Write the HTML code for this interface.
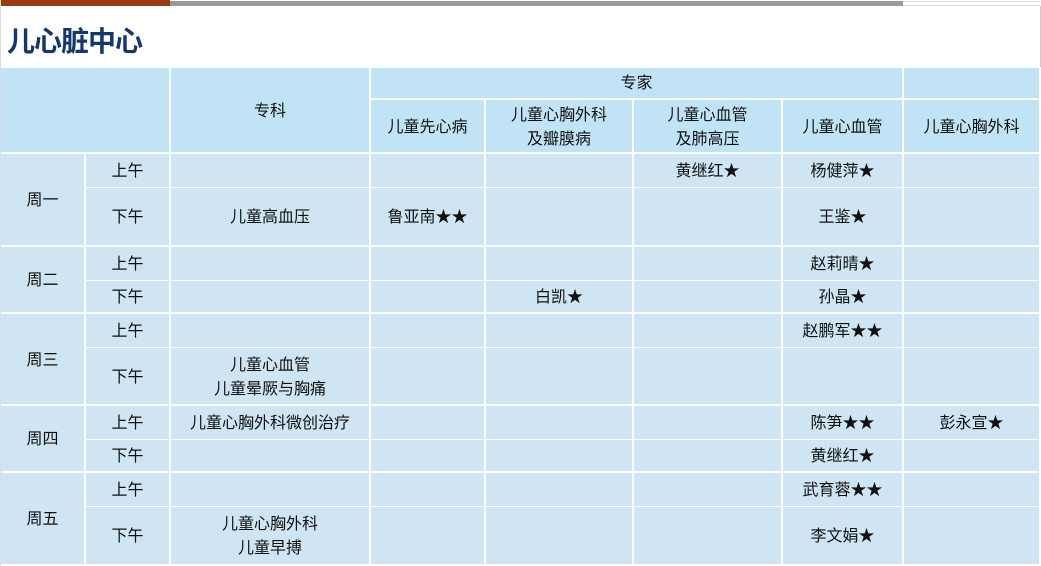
<!DOCTYPE html>
<html><head><meta charset="utf-8"><style>
*{margin:0;padding:0;box-sizing:border-box}
body{width:1041px;height:566px;background:#fff;font-family:"Liberation Sans","Noto Sans CJK SC","WenQuanYi Zen Hei",sans-serif;position:relative;overflow:hidden}
.b1{position:absolute;left:0;top:0;width:170px;height:6px;background:#9a3a12}
.b2{position:absolute;left:170px;top:1px;width:733px;height:5px;background:#999}
.b3{position:absolute;left:903px;top:1px;width:137px;height:5px;border-top:1px solid #ddd;border-bottom:1px solid #ddd}
.lb{position:absolute;left:0;top:0;width:1px;height:566px;background:#ddd}
.rb{position:absolute;left:1040px;top:6px;width:1px;height:61px;background:#ccc}
h1{position:absolute;left:7px;top:20px;font-size:28px;font-weight:bold;color:#14386a;letter-spacing:-1px}
table{position:absolute;left:1px;top:68px;width:1040px;border-collapse:separate;border-spacing:0;table-layout:fixed}
td{background:#cfe5f3;text-align:center;vertical-align:middle;font-size:16px;color:#111;border-right:2px solid #fff;border-bottom:1px solid #fff;line-height:24px;padding:3px 0 0 0}
tr.h td{background:#c0e4f6}
tr.e td{border-bottom:2px solid #fff}
td.d{border-bottom:2px solid #fff}
</style></head><body>
<div class="b1"></div><div class="b2"></div><div class="b3"></div><div class="lb"></div><div class="rb"></div>
<h1>儿心脏中心</h1>
<table>
<colgroup><col style="width:85px"><col style="width:85px"><col style="width:200px"><col style="width:115px"><col style="width:148px"><col style="width:149px"><col style="width:121px"><col style="width:137px"></colgroup>
<tr class="h" style="height:32px"><td colspan="2" rowspan="2" class="d"></td><td rowspan="2" class="d" style="vertical-align:top;padding-top:32px">专科</td><td colspan="4" style="border-bottom:2px solid #fff;padding-top:1px">专家</td><td style="border-bottom:2px solid #fff"></td></tr>
<tr class="h e" style="height:54px"><td>儿童先心病</td><td>儿童心胸外科<br>及瓣膜病</td><td>儿童心血管<br>及肺高压</td><td>儿童心血管</td><td>儿童心胸外科</td></tr>

<tr style="height:34px"><td rowspan="2" class="d">周一</td><td>上午</td><td></td><td></td><td></td><td>黄继红★</td><td>杨健萍★</td><td></td></tr>
<tr class="e" style="height:59px"><td>下午</td><td>儿童高血压</td><td>鲁亚南★★</td><td></td><td></td><td>王鉴★</td><td></td></tr>

<tr style="height:34px"><td rowspan="2" class="d">周二</td><td>上午</td><td></td><td></td><td></td><td></td><td>赵莉晴★</td><td></td></tr>
<tr class="e" style="height:33px"><td>下午</td><td></td><td></td><td>白凯★</td><td></td><td>孙晶★</td><td></td></tr>

<tr style="height:34px"><td rowspan="2" class="d">周三</td><td>上午</td><td></td><td></td><td></td><td></td><td>赵鹏军★★</td><td></td></tr>
<tr class="e" style="height:58px"><td>下午</td><td>儿童心血管<br>儿童晕厥与胸痛</td><td></td><td></td><td></td><td></td><td></td></tr>

<tr style="height:34px"><td rowspan="2" class="d">周四</td><td>上午</td><td>儿童心胸外科微创治疗</td><td></td><td></td><td></td><td>陈笋★★</td><td>彭永宣★</td></tr>
<tr class="e" style="height:33px"><td>下午</td><td></td><td></td><td></td><td></td><td>黄继红★</td><td></td></tr>

<tr style="height:34px"><td rowspan="2" class="d">周五</td><td>上午</td><td></td><td></td><td></td><td></td><td>武育蓉★★</td><td></td></tr>
<tr class="e" style="height:59px"><td>下午</td><td>儿童心胸外科<br>儿童早搏</td><td></td><td></td><td></td><td>李文娟★</td><td></td></tr>
</table>
</body></html>
